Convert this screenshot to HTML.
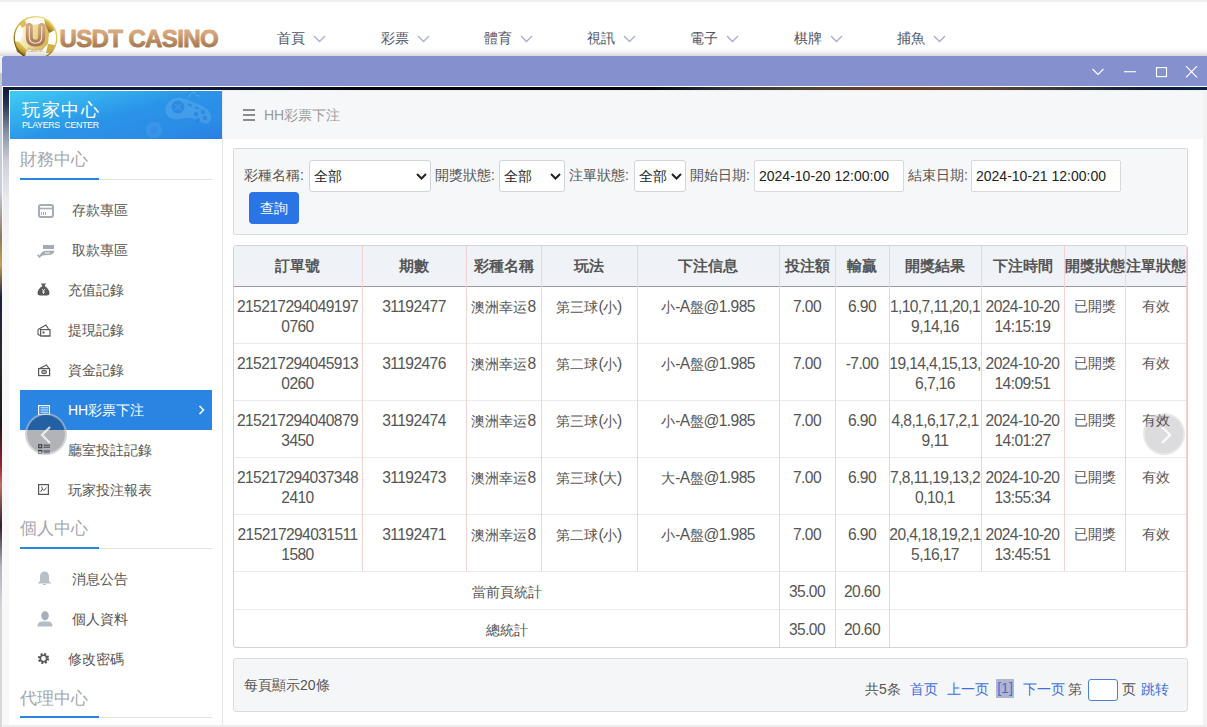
<!DOCTYPE html>
<html><head><meta charset="utf-8">
<style>
*{box-sizing:border-box;margin:0;padding:0}
html,body{width:1207px;height:727px;overflow:hidden;background:#fff;font-family:"Liberation Sans",sans-serif;color:#555}
.abs{position:absolute}
#topstrip{left:0;top:0;width:1207px;height:2px;background:#efefef}
#logo-text{left:59px;top:24px;font-size:24px;font-weight:bold;letter-spacing:-0.45px;line-height:28px;white-space:nowrap;
  background:linear-gradient(#d7a77c,#a9784f);-webkit-background-clip:text;background-clip:text;color:transparent}
.nav{top:29px;font-size:14px;line-height:18px;color:#525466;white-space:nowrap}
.nav svg{position:absolute;left:36px;top:6px}
#hdrshadow{left:0;top:48px;width:1207px;height:8px;background:linear-gradient(rgba(0,0,0,0),rgba(0,0,0,0.04) 40%,rgba(0,0,0,0.15))}
#leftbg{left:0;top:56px;width:2px;height:671px;background:linear-gradient(#f2f2f2,#f0f0f0 16px,#c8c8c8 18px,#c4cbd8 45px,#c9ced8 20%,#8a7860 27%,#c8a050 31%,#1c2040 36%,#2a2a30 45%,#1a1a1a 55%,#a02030 61%,#c07060 64%,#302030 70%,#b0b0c0 76%,#d4d4d8 82%,#d8d8d8)}
#win{left:2px;top:56px;width:1205px;height:671px;background:transparent;overflow:hidden}
#title{left:0;top:0;width:1205px;height:30px;background:#8591cf;border-top-left-radius:3px}
#wline{left:0;top:30px;width:1205px;height:1px;background:#fff}
#bgstrip{left:0;top:31px;width:1205px;height:3px;background:linear-gradient(90deg,#0f1d3f 0px,#0e1a38 200px,#05070f 350px,#03050c 650px,#2e3038 720px,#4a4438 800px,#6a3c24 900px,#5a4838 980px,#3a3a3c 1050px,#0c1a38 1150px,#08254a 1205px)}
#leftgrad{left:0;top:31px;width:8px;height:640px;border-left:1px solid #fafafa;background:linear-gradient(#0f1d3f,#0f1d3f 4px,#2a3656 18px,#8890a6 45px,#cdd0da 75px,#ececf0 115px,#f8f8f8 170px)}
#side{left:7px;top:34px;width:214px;height:637px;background:#fff;border-right:1px solid #e6e6e6}
#content{left:221px;top:34px;width:980px;height:635px;background:#fff}
#rstrip{left:1201px;top:34px;width:4px;height:637px;background:#f2f2f2}
#bstrip{left:1px;top:669px;width:1204px;height:2px;background:#ededed}

.side-h{position:absolute;left:20px;font-size:16.6px;line-height:20px;color:#a3a7ad;white-space:nowrap}
.side-ul{position:absolute;left:20px;width:192px;height:1px;background:#e3e3e3}
.side-ul i{position:absolute;left:0;top:-1px;width:79px;height:2px;background:#2a84e2}
.item{position:absolute;left:20px;width:192px;height:40px;line-height:40px;font-size:14px;color:#555;white-space:nowrap}
.item span{position:absolute;top:0}
.item svg{position:absolute}
.item.act{background:#2a84e2;color:#fff}
#ph{position:absolute;left:10px;top:91px;width:212px;height:48px;background:linear-gradient(165deg,#41cdf3 0%,#35b0ee 25%,#2a94e8 50%,#2a8ce6 80%,#2a7fe2 100%);overflow:hidden}
#ph .cn{position:absolute;left:12px;top:8px;font-size:18px;letter-spacing:1.6px;line-height:22px;color:#fff;white-space:nowrap}
#ph .en{position:absolute;left:12px;top:29px;font-size:8.8px;line-height:11px;color:#fff;letter-spacing:-0.3px;word-spacing:2.5px;white-space:nowrap}

#chead{left:223px;top:90px;width:980px;height:49px;background:#f6f7f8;border-top:1px solid #efefef}
#chead .t{position:absolute;left:41px;top:15px;font-size:14px;line-height:18px;color:#9a9a9a;white-space:nowrap}
.th{top:0;height:40px;line-height:40px;text-align:center;font-size:15px;font-weight:bold;color:#555;white-space:nowrap}
.td{height:56px;padding-top:10px;line-height:19.4px;text-align:center;font-size:14px;color:#555;white-space:nowrap}
.ts{height:38px;line-height:38.5px;text-align:center;font-size:14px;color:#555;white-space:nowrap}
.box{position:absolute;background:#f5f6f8;border:1px solid #d8dce1;border-radius:3px}
.lbl{position:absolute;top:160px;height:31px;line-height:31px;font-size:14px;color:#555;white-space:nowrap}
.sel{position:absolute;top:160px;height:32px;background:#fff;border:1px solid #ced4da;border-radius:3px;font-size:14px;line-height:30px;color:#212529;padding-left:4px;white-space:nowrap}
.sel svg{position:absolute;right:3px;top:12px}
.inp{position:absolute;top:160px;height:32px;background:#fff;border:1px solid #d6d9dd;border-radius:2px;font-size:14px;line-height:30px;color:#222;padding-left:4px;white-space:nowrap}
#btn{position:absolute;left:249px;top:192px;width:50px;height:32px;background:#2b74e6;border-radius:4px;color:#fff;font-size:14px;line-height:32px;text-align:center}
.pg{position:absolute;top:680px;line-height:18px;font-size:14px;white-space:nowrap}
.blue{color:#3c6fe0}
.n{font-size:15.6px;letter-spacing:-0.6px}
.circ{position:absolute;width:42px;height:42px;border-radius:50%}
</style></head>
<body>
<div id="topstrip" class="abs"></div>
<svg class="abs" style="left:13px;top:16px" width="46" height="46" viewBox="0 0 46 46">
  <defs>
    <linearGradient id="gold" x1="0.8" y1="0" x2="0.2" y2="1">
      <stop offset="0" stop-color="#f4de7c"/><stop offset="0.5" stop-color="#d2ae3e"/><stop offset="1" stop-color="#5e420a"/>
    </linearGradient>
    <linearGradient id="cg" x1="0" y1="0" x2="1" y2="0.3">
      <stop offset="0" stop-color="#fffdf0"/><stop offset="0.5" stop-color="#efe0a0"/><stop offset="1" stop-color="#d9bc58"/>
    </linearGradient>
    <linearGradient id="brown" x1="0" y1="0" x2="0" y2="1">
      <stop offset="0" stop-color="#d4a783"/><stop offset="1" stop-color="#a87753"/>
    </linearGradient>
  </defs>
  <circle cx="22.5" cy="22" r="21.5" fill="#fffefa"/>
  <path d="M9 12 L14 9 L32 8 L36 17 L35 28 L29 34 L14 34 L6 26 L10 19Z" fill="url(#cg)"/>
  <path d="M31 2 L37 5 L42 14 L36 17 L32 8Z" fill="url(#gold)"/>
  <path d="M6 7 L12 4 L14 9 L9 12Z" fill="#dcc060"/>
  <path d="M1 25 L6 26 L14 34 L12 40 L4 36Z" fill="url(#gold)"/>
  <path d="M35 28 L42 29 L39 37 L33 37Z" fill="#d0b048"/>
  <circle cx="22.5" cy="22" r="21.3" fill="none" stroke="url(#gold)" stroke-width="1.3"/>
  <path d="M16.3 10.5 L16.3 21 Q16.3 27.2 22.5 27.2 Q28.7 27.2 28.7 21 L28.7 10.5" fill="none" stroke="url(#brown)" stroke-width="7" stroke-linecap="round"/>
  <path d="M16.3 10.5 L16.3 21 Q16.3 27.2 22.5 27.2 Q28.7 27.2 28.7 21 L28.7 10.5" fill="none" stroke="#f6e8da" stroke-width="1.1" stroke-linecap="round"/>
  <text x="22" y="35.5" font-size="5" fill="#c9a088" text-anchor="middle" font-family="Liberation Sans">Casino</text>
</svg>
<svg class="abs" style="left:56px;top:22px" width="170" height="32" viewBox="0 0 170 32">
  <defs><linearGradient id="lt" x1="0" y1="0" x2="0" y2="1"><stop offset="0.25" stop-color="#d8a97f"/><stop offset="0.8" stop-color="#a7784f"/></linearGradient></defs>
  <text x="3.5" y="25.3" font-family="Liberation Sans" font-weight="bold" font-size="24" letter-spacing="-0.62" fill="url(#lt)" stroke="url(#lt)" stroke-width="0.9" stroke-linejoin="round">USDT CASINO</text>
</svg>

<div class="abs nav" style="left:277px">首頁<svg width="13" height="8" viewBox="0 0 13 8"><path d="M1 1 L6.5 6.5 L12 1" fill="none" stroke="#a9b0cf" stroke-width="1.4"/></svg></div>
<div class="abs nav" style="left:381px">彩票<svg width="13" height="8" viewBox="0 0 13 8"><path d="M1 1 L6.5 6.5 L12 1" fill="none" stroke="#a9b0cf" stroke-width="1.4"/></svg></div>
<div class="abs nav" style="left:484px">體育<svg width="13" height="8" viewBox="0 0 13 8"><path d="M1 1 L6.5 6.5 L12 1" fill="none" stroke="#a9b0cf" stroke-width="1.4"/></svg></div>
<div class="abs nav" style="left:587px">視訊<svg width="13" height="8" viewBox="0 0 13 8"><path d="M1 1 L6.5 6.5 L12 1" fill="none" stroke="#a9b0cf" stroke-width="1.4"/></svg></div>
<div class="abs nav" style="left:690px">電子<svg width="13" height="8" viewBox="0 0 13 8"><path d="M1 1 L6.5 6.5 L12 1" fill="none" stroke="#a9b0cf" stroke-width="1.4"/></svg></div>
<div class="abs nav" style="left:794px">棋牌<svg width="13" height="8" viewBox="0 0 13 8"><path d="M1 1 L6.5 6.5 L12 1" fill="none" stroke="#a9b0cf" stroke-width="1.4"/></svg></div>
<div class="abs nav" style="left:897px">捕魚<svg width="13" height="8" viewBox="0 0 13 8"><path d="M1 1 L6.5 6.5 L12 1" fill="none" stroke="#a9b0cf" stroke-width="1.4"/></svg></div>
<div id="hdrshadow" class="abs"></div>
<div id="leftbg" class="abs"></div>
<div id="win" class="abs">
  <div id="title" class="abs"></div>
  <svg class="abs" style="left:1088px;top:10px" width="115" height="16" viewBox="0 0 115 16">
    <path d="M2.5 3 L8 8.5 L13.5 3" fill="none" stroke="#fff" stroke-width="1.1"/>
    <path d="M34 5.7 L46 5.7" fill="none" stroke="#fff" stroke-width="1.1"/>
    <rect x="66.5" y="1.6" width="10" height="9" fill="none" stroke="#fff" stroke-width="1.1"/>
    <path d="M96 0 L107 11.3 M107 0 L96 11.3" fill="none" stroke="#fff" stroke-width="1.1"/>
  </svg>
  <div id="wline" class="abs"></div>
  <div id="bgstrip" class="abs"></div>
  <div id="leftgrad" class="abs"></div>
  <div id="side" class="abs"></div>
  <div id="content" class="abs"></div>
  <div id="rstrip" class="abs"></div>
  <div id="bstrip" class="abs"></div>
</div>

<div id="ph"><div class="cn">玩家中心</div><div class="en">PLAYERS CENTER</div>
<svg style="position:absolute;left:130px;top:0px" width="82" height="48" viewBox="0 0 82 48">
 <g transform="translate(22,2)">
 <path d="M6 10 Q12 2 24 6 L40 13 Q50 18 49 26 Q47 33 38 29 L30 25 Q22 25 16 26 Q6 27 4 20 Q2 14 6 10Z" fill="#fff" opacity="0.12"/>
 <circle cx="16" cy="14" r="6.5" fill="#1f78dc" opacity="0.55"/>
 <path d="M13 11 L19 17 M19 11 L13 17" stroke="#4aa0ee" stroke-width="1.2" opacity="0.6"/>
 <path d="M26 11 L30 13 M33 14 L37 16" stroke="#1f78dc" stroke-width="1.6" opacity="0.6"/>
 <g fill="#1f78dc" opacity="0.55"><circle cx="34" cy="21" r="2.2"/><circle cx="41" cy="19" r="2.2"/><circle cx="36" cy="27" r="2.2"/><circle cx="43" cy="25" r="2.2"/></g>
 <path d="M26 5 Q28 0 32 -1 Q34 4 38 3" stroke="#fff" stroke-width="1" fill="none" opacity="0.18"/>
 </g>
 <circle cx="14" cy="39" r="8" fill="#fff" opacity="0.07"/>
 <circle cx="14" cy="39" r="4" fill="#1f78dc" opacity="0.2"/>
</svg>
</div>
<div class="side-h" style="top:150px">財務中心</div>
<div class="side-ul" style="top:179px"><i></i></div>
<div class="item" style="top:190px"><svg style="left:18px;top:14px" width="16" height="14" viewBox="0 0 16 14"><rect x="1" y="1" width="14" height="12" rx="2" fill="none" stroke="#a4acb4" stroke-width="2"/><path d="M1 4.5 H15" stroke="#a4acb4" stroke-width="1.6"/><path d="M3.5 8 V11 M5.5 8 V11 M7.5 8 V11" stroke="#a4acb4" stroke-width="1"/></svg><span style="left:52px">存款專區</span></div>
<div class="item" style="top:230px"><svg style="left:17px;top:15px" width="18" height="13" viewBox="0 0 18 13"><rect x="6" y="0" width="11" height="4" fill="#a4acb4"/><path d="M2.5 10.5 Q5 6 9 5.8 L17.5 5.8 Q16.5 9.5 12.5 10 L7 10.2 Q5 10.5 3.5 12Z" fill="#a4acb4"/><path d="M8 8 L13 8" stroke="#fff" stroke-width="0.9"/><path d="M0.8 9.8 L3 12.5" stroke="#a4acb4" stroke-width="1.8"/></svg><span style="left:52px">取款專區</span></div>
<div class="item" style="top:270px"><svg style="left:17px;top:13px" width="13" height="13" viewBox="0 0 13 13"><path d="M4 0.5 L9 0.5 L7.5 3 Q12.5 6 12.5 10.5 Q12.5 12.5 10 12.5 L3 12.5 Q0.5 12.5 0.5 10.5 Q0.5 6 5.5 3Z" fill="#595959"/><path d="M5 6 L6.5 8 L8 6 M6.5 8 V11 M5 9 H8" stroke="#fff" stroke-width="0.8" fill="none"/></svg><span style="left:48px">充值記錄</span></div>
<div class="item" style="top:310px"><svg style="left:17px;top:14px" width="14" height="13" viewBox="0 0 14 13"><path d="M1 5.5 L9 1 L11.5 5" fill="none" stroke="#595959" stroke-width="1.2"/><rect x="3.6" y="5.6" width="9.4" height="6.4" fill="#fff" stroke="#595959" stroke-width="1.2"/><path d="M1 5.5 V10.5 L3.6 11.5" fill="none" stroke="#595959" stroke-width="1.1"/><rect x="5.5" y="7.5" width="2" height="2" fill="#595959"/><path d="M5 12 H13" stroke="#595959" stroke-width="0.8"/></svg><span style="left:48px">提現記錄</span></div>
<div class="item" style="top:350px"><svg style="left:17px;top:14px" width="14" height="13" viewBox="0 0 14 13"><path d="M1.5 5 L9.5 1 L12 4.5" fill="none" stroke="#595959" stroke-width="1.2"/><rect x="1.6" y="4.6" width="11" height="7" fill="#fff" stroke="#595959" stroke-width="1.2"/><ellipse cx="7.1" cy="8.1" rx="2.3" ry="1.7" fill="none" stroke="#595959" stroke-width="1.1"/><circle cx="7.1" cy="8.1" r="0.8" fill="#595959"/></svg><span style="left:48px">資金記錄</span></div>
<div class="item act" style="top:390px"><svg style="left:18px;top:15px" width="12" height="10" viewBox="0 0 12 10"><rect x="0.6" y="0.6" width="11" height="9" fill="none" stroke="#fff" stroke-width="1.2"/><path d="M2.5 2.8 H10.5 M2.5 5 H10.5 M2.5 7.2 H10.5" stroke="#fff" stroke-width="0.9"/></svg><span style="left:48px">HH彩票下注</span><svg style="left:178px;top:15px" width="8" height="10" viewBox="0 0 8 10"><path d="M1.5 1 L5.5 5 L1.5 9" fill="none" stroke="#fff" stroke-width="1.5"/></svg></div>
<div class="item" style="top:430px"><svg style="left:18px;top:14px" width="12" height="11" viewBox="0 0 12 11"><rect x="0.7" y="0.7" width="3" height="3" fill="none" stroke="#555" stroke-width="1.2"/><rect x="0.7" y="6.5" width="3" height="3" fill="none" stroke="#555" stroke-width="1.2"/><path d="M5.5 1.2 H12 M5.5 3.2 H12 M5.5 7 H12 M5.5 9 H12" stroke="#555" stroke-width="1"/></svg><span style="left:48px">廳室投註記錄</span></div>
<div class="item" style="top:470px"><svg style="left:18px;top:14px" width="11" height="11" viewBox="0 0 11 11"><rect x="0.6" y="0.6" width="9.8" height="9.8" fill="none" stroke="#555" stroke-width="1.2"/><path d="M2.5 8 L4.5 5 L6 6.5 L8.5 3.5 M3.5 2.5 L4.5 5" fill="none" stroke="#555" stroke-width="1"/></svg><span style="left:48px">玩家投注報表</span></div>
<div class="side-h" style="top:519px">個人中心</div>
<div class="side-ul" style="top:548px"><i></i></div>
<div class="item" style="top:559px"><svg style="left:17px;top:12px" width="15" height="15" viewBox="0 0 15 15"><path d="M7.5 0.5 Q12 0.5 12 6 L12 10 L14.5 12.5 L0.5 12.5 L3 10 L3 6 Q3 0.5 7.5 0.5Z" fill="#b9c0c7"/><path d="M6 13.5 H9" stroke="#b9c0c7" stroke-width="1"/></svg><span style="left:52px">消息公告</span></div>
<div class="item" style="top:599px"><svg style="left:17px;top:12px" width="16" height="16" viewBox="0 0 16 16"><ellipse cx="8" cy="4.8" rx="3.8" ry="4.6" fill="#a7b0b9"/><path d="M0.5 15.5 Q0.5 10 6 10.5 L10 10.5 Q15.5 10 15.5 15.5Z" fill="#b4bcc4"/></svg><span style="left:52px">個人資料</span></div>
<div class="item" style="top:639px"><svg style="left:17px;top:13px" width="13" height="13" viewBox="0 0 13 13"><circle cx="6.5" cy="6.5" r="4.3" fill="none" stroke="#555" stroke-width="2.6" stroke-dasharray="1.8 1.6"/><circle cx="6.5" cy="6.5" r="3.2" fill="none" stroke="#555" stroke-width="1.6"/></svg><span style="left:48px">修改密碼</span></div>
<div class="side-h" style="top:689px">代理中心</div>
<div class="side-ul" style="top:717px"><i></i></div>

<div id="chead" class="abs"><svg style="position:absolute;left:20px;top:17px" width="12" height="13" viewBox="0 0 12 13"><path d="M0 2 H12 M0 7 H12 M0 12 H12" stroke="#8c8c8c" stroke-width="2"/></svg><div class="t">HH彩票下注</div></div>
<div class="box" style="left:233px;top:148px;width:955px;height:87px;border-radius:1.5px;border-color:#d3dadb;background:#f6f7f8"></div>
<div class="lbl" style="left:244px">彩種名稱:</div>
<div class="sel" style="left:309px;width:122px">全部<svg width="11" height="7" viewBox="0 0 11 7"><path d="M1 1 L5.5 5.5 L10 1" fill="none" stroke="#222" stroke-width="2"/></svg></div>
<div class="lbl" style="left:435px">開獎狀態:</div>
<div class="sel" style="left:499px;width:66px">全部<svg width="11" height="7" viewBox="0 0 11 7"><path d="M1 1 L5.5 5.5 L10 1" fill="none" stroke="#222" stroke-width="2"/></svg></div>
<div class="lbl" style="left:569px">注單狀態:</div>
<div class="sel" style="left:634px;width:52px">全部<svg width="11" height="7" viewBox="0 0 11 7"><path d="M1 1 L5.5 5.5 L10 1" fill="none" stroke="#222" stroke-width="2"/></svg></div>
<div class="lbl" style="left:690px">開始日期:</div>
<div class="inp" style="left:754px;width:150px">2024-10-20 12:00:00</div>
<div class="lbl" style="left:908px">結束日期:</div>
<div class="inp" style="left:971px;width:150px">2024-10-21 12:00:00</div>
<div id="btn">查詢</div>
<div class="abs" style="left:233px;top:245px;width:955px;height:403px;border:1px solid #cfd4da;border-radius:3px;background:#fff;overflow:hidden">
<div class="abs" style="left:0;top:0;width:953px;height:40px;background:#eff2f6"></div>
<div class="abs" style="left:0;top:40px;width:953px;height:1px;background:#a39797"></div>
<div class="abs" style="left:0;top:97px;width:953px;height:1px;background:#e9ebeb"></div>
<div class="abs" style="left:0;top:154px;width:953px;height:1px;background:#e9ebeb"></div>
<div class="abs" style="left:0;top:211px;width:953px;height:1px;background:#e9ebeb"></div>
<div class="abs" style="left:0;top:268px;width:953px;height:1px;background:#e9ebeb"></div>
<div class="abs" style="left:0;top:325px;width:953px;height:1px;background:#e9ebeb"></div>
<div class="abs" style="left:0;top:363px;width:953px;height:1px;background:#e9ebeb"></div>
<div class="abs" style="left:128px;top:0;width:1px;height:325px;background:#f4d2d2"></div>
<div class="abs" style="left:232px;top:0;width:1px;height:325px;background:#f4d2d2"></div>
<div class="abs" style="left:307px;top:0;width:1px;height:325px;background:#f4d2d2"></div>
<div class="abs" style="left:403px;top:0;width:1px;height:325px;background:#f4d2d2"></div>
<div class="abs" style="left:545px;top:0;width:1px;height:401px;background:#f4d2d2"></div>
<div class="abs" style="left:601px;top:0;width:1px;height:401px;background:#f4d2d2"></div>
<div class="abs" style="left:655px;top:0;width:1px;height:401px;background:#f4d2d2"></div>
<div class="abs" style="left:747px;top:0;width:1px;height:325px;background:#f4d2d2"></div>
<div class="abs" style="left:830px;top:0;width:1px;height:325px;background:#f4d2d2"></div>
<div class="abs" style="left:891px;top:0;width:1px;height:325px;background:#f4d2d2"></div>
<div class="abs" style="left:952px;top:0;width:1px;height:401px;background:#f4d2d2"></div>
<div class="abs th" style="left:-1px;width:129px">訂單號</div>
<div class="abs th" style="left:128px;width:104px">期數</div>
<div class="abs th" style="left:232px;width:75px">彩種名稱</div>
<div class="abs th" style="left:307px;width:96px">玩法</div>
<div class="abs th" style="left:403px;width:142px">下注信息</div>
<div class="abs th" style="left:545px;width:56px">投注額</div>
<div class="abs th" style="left:601px;width:54px">輸贏</div>
<div class="abs th" style="left:655px;width:92px">開獎結果</div>
<div class="abs th" style="left:747px;width:83px">下注時間</div>
<div class="abs th" style="left:830px;width:61px">開獎狀態</div>
<div class="abs th" style="left:891px;width:62px">注單狀態</div>
<div class="abs td" style="left:-1px;top:41px;width:129px"><span class="n">215217294049197</span><br><span class="n">0760</span></div>
<div class="abs td" style="left:128px;top:41px;width:104px"><span class="n">31192477</span></div>
<div class="abs td" style="left:232px;top:41px;width:75px">澳洲幸运<span class="n">8</span></div>
<div class="abs td" style="left:307px;top:41px;width:96px">第三球<span class="n">(</span>小<span class="n">)</span></div>
<div class="abs td" style="left:403px;top:41px;width:142px">小<span class="n">-A</span>盤<span class="n">@1.985</span></div>
<div class="abs td" style="left:545px;top:41px;width:56px"><span class="n">7.00</span></div>
<div class="abs td" style="left:601px;top:41px;width:54px"><span class="n">6.90</span></div>
<div class="abs td" style="left:655px;top:41px;width:92px"><span class="n">1,10,7,11,20,1</span><br><span class="n">9,14,16</span></div>
<div class="abs td" style="left:747px;top:41px;width:83px"><span class="n">2024-10-20</span><br><span class="n">14:15:19</span></div>
<div class="abs td" style="left:830px;top:41px;width:61px">已開獎</div>
<div class="abs td" style="left:891px;top:41px;width:62px">有效</div>
<div class="abs td" style="left:-1px;top:98px;width:129px"><span class="n">215217294045913</span><br><span class="n">0260</span></div>
<div class="abs td" style="left:128px;top:98px;width:104px"><span class="n">31192476</span></div>
<div class="abs td" style="left:232px;top:98px;width:75px">澳洲幸运<span class="n">8</span></div>
<div class="abs td" style="left:307px;top:98px;width:96px">第二球<span class="n">(</span>小<span class="n">)</span></div>
<div class="abs td" style="left:403px;top:98px;width:142px">小<span class="n">-A</span>盤<span class="n">@1.985</span></div>
<div class="abs td" style="left:545px;top:98px;width:56px"><span class="n">7.00</span></div>
<div class="abs td" style="left:601px;top:98px;width:54px"><span class="n">-7.00</span></div>
<div class="abs td" style="left:655px;top:98px;width:92px"><span class="n">19,14,4,15,13,</span><br><span class="n">6,7,16</span></div>
<div class="abs td" style="left:747px;top:98px;width:83px"><span class="n">2024-10-20</span><br><span class="n">14:09:51</span></div>
<div class="abs td" style="left:830px;top:98px;width:61px">已開獎</div>
<div class="abs td" style="left:891px;top:98px;width:62px">有效</div>
<div class="abs td" style="left:-1px;top:155px;width:129px"><span class="n">215217294040879</span><br><span class="n">3450</span></div>
<div class="abs td" style="left:128px;top:155px;width:104px"><span class="n">31192474</span></div>
<div class="abs td" style="left:232px;top:155px;width:75px">澳洲幸运<span class="n">8</span></div>
<div class="abs td" style="left:307px;top:155px;width:96px">第三球<span class="n">(</span>小<span class="n">)</span></div>
<div class="abs td" style="left:403px;top:155px;width:142px">小<span class="n">-A</span>盤<span class="n">@1.985</span></div>
<div class="abs td" style="left:545px;top:155px;width:56px"><span class="n">7.00</span></div>
<div class="abs td" style="left:601px;top:155px;width:54px"><span class="n">6.90</span></div>
<div class="abs td" style="left:655px;top:155px;width:92px"><span class="n">4,8,1,6,17,2,1</span><br><span class="n">9,11</span></div>
<div class="abs td" style="left:747px;top:155px;width:83px"><span class="n">2024-10-20</span><br><span class="n">14:01:27</span></div>
<div class="abs td" style="left:830px;top:155px;width:61px">已開獎</div>
<div class="abs td" style="left:891px;top:155px;width:62px">有效</div>
<div class="abs td" style="left:-1px;top:212px;width:129px"><span class="n">215217294037348</span><br><span class="n">2410</span></div>
<div class="abs td" style="left:128px;top:212px;width:104px"><span class="n">31192473</span></div>
<div class="abs td" style="left:232px;top:212px;width:75px">澳洲幸运<span class="n">8</span></div>
<div class="abs td" style="left:307px;top:212px;width:96px">第三球<span class="n">(</span>大<span class="n">)</span></div>
<div class="abs td" style="left:403px;top:212px;width:142px">大<span class="n">-A</span>盤<span class="n">@1.985</span></div>
<div class="abs td" style="left:545px;top:212px;width:56px"><span class="n">7.00</span></div>
<div class="abs td" style="left:601px;top:212px;width:54px"><span class="n">6.90</span></div>
<div class="abs td" style="left:655px;top:212px;width:92px"><span class="n">7,8,11,19,13,2</span><br><span class="n">0,10,1</span></div>
<div class="abs td" style="left:747px;top:212px;width:83px"><span class="n">2024-10-20</span><br><span class="n">13:55:34</span></div>
<div class="abs td" style="left:830px;top:212px;width:61px">已開獎</div>
<div class="abs td" style="left:891px;top:212px;width:62px">有效</div>
<div class="abs td" style="left:-1px;top:269px;width:129px"><span class="n">215217294031511</span><br><span class="n">1580</span></div>
<div class="abs td" style="left:128px;top:269px;width:104px"><span class="n">31192471</span></div>
<div class="abs td" style="left:232px;top:269px;width:75px">澳洲幸运<span class="n">8</span></div>
<div class="abs td" style="left:307px;top:269px;width:96px">第二球<span class="n">(</span>小<span class="n">)</span></div>
<div class="abs td" style="left:403px;top:269px;width:142px">小<span class="n">-A</span>盤<span class="n">@1.985</span></div>
<div class="abs td" style="left:545px;top:269px;width:56px"><span class="n">7.00</span></div>
<div class="abs td" style="left:601px;top:269px;width:54px"><span class="n">6.90</span></div>
<div class="abs td" style="left:655px;top:269px;width:92px"><span class="n">20,4,18,19,2,1</span><br><span class="n">5,16,17</span></div>
<div class="abs td" style="left:747px;top:269px;width:83px"><span class="n">2024-10-20</span><br><span class="n">13:45:51</span></div>
<div class="abs td" style="left:830px;top:269px;width:61px">已開獎</div>
<div class="abs td" style="left:891px;top:269px;width:62px">有效</div>
<div class="abs ts" style="left:0;top:327px;width:546px">當前頁統計</div>
<div class="abs ts" style="left:545px;top:327px;width:56px"><span class="n">35.00</span></div>
<div class="abs ts" style="left:601px;top:327px;width:54px"><span class="n">20.60</span></div>
<div class="abs ts" style="left:0;top:365px;width:546px">總統計</div>
<div class="abs ts" style="left:545px;top:365px;width:56px"><span class="n">35.00</span></div>
<div class="abs ts" style="left:601px;top:365px;width:54px"><span class="n">20.60</span></div>
</div>
<div class="box" style="left:233px;top:658px;width:955px;height:54px"></div>
<div class="pg" style="left:244px;top:676px">每頁顯示20條</div>
<div class="pg" style="left:865px">共5条</div>
<div class="pg blue" style="left:910px">首页</div>
<div class="pg blue" style="left:947px">上一页</div>
<div class="pg blue" style="left:996px;top:679px;width:18px;height:19px;background:#b3b6c8;text-align:center">[1]</div>
<div class="pg blue" style="left:1023px">下一页</div>
<div class="pg" style="left:1068px">第</div>
<div class="abs" style="left:1088px;top:679px;width:30px;height:22px;background:#fff;border:1px solid #4a7fe0;border-radius:3px"></div>
<div class="pg" style="left:1122px">页</div>
<div class="pg blue" style="left:1141px">跳转</div>
<div class="circ" style="left:25px;top:413px;background:rgba(20,25,40,0.33);border:2px solid rgba(255,255,255,0.45)"><svg style="position:absolute;left:12px;top:11px" width="14" height="18" viewBox="0 0 14 18"><path d="M11 1 L3 9 L11 17" fill="none" stroke="rgba(255,255,255,0.75)" stroke-width="2.2"/></svg></div>
<div class="circ" style="left:1143px;top:413px;background:rgba(40,40,50,0.16);border:2px solid rgba(255,255,255,0.3)"><svg style="position:absolute;left:14px;top:11px" width="14" height="18" viewBox="0 0 14 18"><path d="M3 1 L11 9 L3 17" fill="none" stroke="rgba(255,255,255,0.9)" stroke-width="2.2"/></svg></div>
</body></html>
